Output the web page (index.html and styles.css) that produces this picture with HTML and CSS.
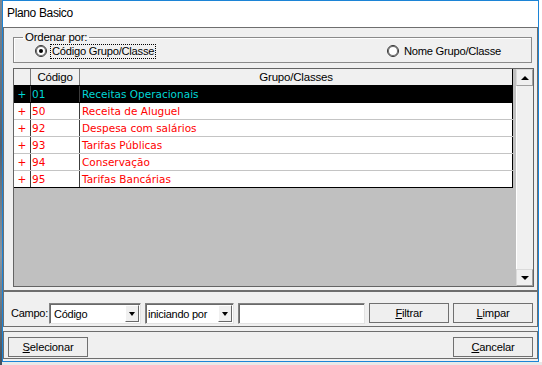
FILE: index.html
```html
<!DOCTYPE html>
<html lang="pt">
<head>
    <meta charset="utf-8">
    <title>Plano Basico</title>
    <link rel="stylesheet" href="styles.css">
</head>
<body>
<div class="screen">
    <div class="edge_left"></div>

    <div class="window">
        <div class="titlebar">Plano Basico</div>

        <div class="client">
            <!-- Ordering + grid -->
            <div class="panel panel_main">
                <fieldset class="group">
                    <legend>Ordenar por:</legend>
                    <div class="radios">
                        <label class="radio">
                            <span class="radio_dot checked"></span>
                            <span class="radio_text focus">Código Grupo/Classe</span>
                        </label>
                        <label class="radio radio_right">
                            <span class="radio_dot"></span>
                            <span class="radio_text">Nome Grupo/Classe</span>
                        </label>
                    </div>
                </fieldset>

                <div class="grid">
                    <div class="grid_area">
                        <div class="grid_row grid_head">
                            <div class="cell"></div>
                            <div class="cell">Código</div>
                            <div class="cell">Grupo/Classes</div>
                        </div>
                        <div class="grid_row selected">
                            <div class="cell">+</div>
                            <div class="cell">01</div>
                            <div class="cell">Receitas Operacionais</div>
                        </div>
                        <div class="grid_row">
                            <div class="cell">+</div>
                            <div class="cell">50</div>
                            <div class="cell">Receita de Aluguel</div>
                        </div>
                        <div class="grid_row">
                            <div class="cell">+</div>
                            <div class="cell">92</div>
                            <div class="cell">Despesa com salários</div>
                        </div>
                        <div class="grid_row">
                            <div class="cell">+</div>
                            <div class="cell">93</div>
                            <div class="cell">Tarifas Públicas</div>
                        </div>
                        <div class="grid_row">
                            <div class="cell">+</div>
                            <div class="cell">94</div>
                            <div class="cell">Conservação</div>
                        </div>
                        <div class="grid_row last">
                            <div class="cell">+</div>
                            <div class="cell">95</div>
                            <div class="cell">Tarifas Bancárias</div>
                        </div>
                    </div>

                    <div class="scrollbar">
                        <div class="scroll_btn"><span class="arrow_up"></span></div>
                        <div class="scroll_track"></div>
                        <div class="scroll_btn"><span class="arrow_down"></span></div>
                    </div>
                </div>
            </div>

            <!-- Filter -->
            <div class="panel panel_filter">
                <span class="field_label">Campo:</span>
                <div class="combo combo_field">
                    <span class="combo_text">Código</span>
                    <span class="combo_btn"><span class="arrow_down"></span></span>
                </div>
                <div class="combo combo_mode">
                    <span class="combo_text">iniciando por</span>
                    <span class="combo_btn"><span class="arrow_down"></span></span>
                </div>
                <div class="edit"></div>
                <button class="btn"><u>F</u>iltrar</button>
                <button class="btn"><u>L</u>impar</button>
            </div>

            <!-- Actions -->
            <div class="panel panel_buttons">
                <button class="btn"><u>S</u>elecionar</button>
                <button class="btn"><u>C</u>ancelar</button>
            </div>
        </div>
    </div>

    <div class="edge_right"></div>
</div>
</body>
</html>
```

FILE: styles.css
```css
/* Constants */
:root {
    --win-blue: #1c84d6;
    --face: #f0f0f0;
    --frame: #6e6e6e;
    --grid-bg: #c0c0c0;
    --row-line: #c4c4c4;
    --red: #ff0000;
    --cyan: #00d6d6;
}

/* Base */
html, body {
    margin: 0;
    padding: 0;
    background: #e8e8e8;
    font-family: "Liberation Sans", Arial, sans-serif;
    font-size: 11px;
    letter-spacing: -0.25px;
    color: #000;
}

.screen {
    display: flex;
    width: 542px;
    height: 365px;
    overflow: hidden;
}

.edge_left {
    width: 2px;
    height: 365px;
    background: linear-gradient(#7b8794, #55626f 40%, #8b96a1 70%, #44505c);
}

.edge_right {
    flex: 1;
    height: 362px;
    background: #fff;
}

/* Window frame */
.window {
    box-sizing: border-box;
    width: 537px;
    height: 362px;
    border: 1px solid var(--win-blue);
    background: var(--face);
    display: flex;
    flex-direction: column;
}

.titlebar {
    height: 26px;
    line-height: 24px;
    padding-left: 4px;
    background: #fff;
    font-size: 12px;
    letter-spacing: -0.35px;
}

.client {
    flex: 1;
    display: flex;
    flex-direction: column;
}

.panel {
    border: 1px solid var(--frame);
}

/* Top panel */
.panel_main {
    box-sizing: border-box;
    height: 264px;
    padding: 2px 3px 0 9px;
}

.group {
    margin: 0 2px 0 0;
    padding: 0 0 4px 0;
    border: 1px solid #8a8a8a;
    box-shadow: inset 1px 1px #fff;
    min-width: 0;
}

.group legend {
    margin-left: 9px;
    padding: 0 2px;
    line-height: 14px;
    font-size: 11.5px;
}

.radios {
    display: flex;
    align-items: center;
    height: 14px;
    padding: 0 29px 0 21px;
}

.radio {
    display: flex;
    align-items: center;
    gap: 4px;
}

.radio_right {
    margin-left: auto;
}

.radio_dot {
    box-sizing: border-box;
    width: 12px;
    height: 12px;
    border-radius: 50%;
    border: 1px solid #333;
    background: #fff;
    box-shadow: inset 0 0 0 1px #6a6a6a;
    display: flex;
    align-items: center;
    justify-content: center;
}

.radio_dot.checked::after {
    content: "";
    width: 4px;
    height: 4px;
    border-radius: 50%;
    background: #000;
}

.radio_text {
    font-size: 11.2px;
    line-height: 13px;
    padding: 0 1px;
}

.focus {
    outline: 1px dotted #000;
}

/* Data grid */
.grid {
    margin-top: 5px;
    height: 219px;
    box-sizing: border-box;
    border: 1px solid #646464;
    background: var(--grid-bg);
    display: flex;
    gap: 3px;
}

.grid_area {
    width: 499px;
    font-family: "DejaVu Sans", Verdana, sans-serif;
    font-size: 10.5px;
    letter-spacing: 0;
}

.grid_row {
    display: grid;
    grid-template-columns: 17px 49px 433px;
    height: 17px;
    box-sizing: border-box;
    border-bottom: 1px solid var(--row-line);
    background: #fff;
    color: var(--red);
}

.grid_row .cell {
    box-sizing: border-box;
    border-right: 1px solid #3c3c3c;
    line-height: 16px;
    white-space: nowrap;
    overflow: hidden;
}

.grid_row .cell:nth-child(1) {
    text-align: center;
}

.grid_row .cell:nth-child(2) {
    padding-left: 1px;
}

.grid_row .cell:nth-child(3) {
    padding-left: 2px;
    border-right-color: #000;
}

.grid_head {
    background: var(--face);
    color: #000;
    border-bottom-color: #000;
    font-family: "Liberation Sans", Arial, sans-serif;
    font-size: 11.5px;
    letter-spacing: -0.2px;
}

.grid_head .cell {
    border-right-color: #7a7a7a;
}

.grid_head .cell:nth-child(n) {
    padding-left: 0;
    text-align: center;
}

.grid_row.selected {
    background: #000;
    color: var(--cyan);
    border-bottom-color: #000;
}

.grid_row.last {
    border-bottom-color: #000;
}

/* Scrollbar */
.scrollbar {
    width: 17px;
    display: flex;
    flex-direction: column;
    background: var(--face);
    box-shadow: inset 1px 0 #fff;
}

.scroll_btn {
    box-sizing: border-box;
    height: 17px;
    border: 1px solid #dadada;
    border-right-color: #a0a0a0;
    border-bottom-color: #a0a0a0;
    display: flex;
    align-items: center;
    justify-content: center;
}

.scroll_track {
    flex: 1;
}

.arrow_up,
.arrow_down {
    width: 0;
    height: 0;
    border-left: 4px solid transparent;
    border-right: 4px solid transparent;
}

.arrow_up {
    border-bottom: 4px solid #000;
}

.arrow_down {
    border-top: 4px solid #000;
}

/* Filter panel */
.panel_filter {
    height: 36px;
    box-sizing: border-box;
    padding: 11px 4px 0 7px;
    display: flex;
    align-items: flex-start;
    gap: 4px;
}

.field_label {
    width: 38px;
    margin-right: -4px;
    line-height: 21px;
    white-space: nowrap;
}

.combo,
.edit {
    box-sizing: border-box;
    height: 21px;
    background: #fff;
    border: 1px solid;
    border-color: #828282 #e3e3e3 #e3e3e3 #828282;
    box-shadow: inset 1px 1px #696969;
}

.combo {
    display: flex;
    align-items: center;
    padding: 1px;
}

.combo_field {
    width: 92px;
}

.combo_mode {
    width: 89px;
}

.combo_text {
    flex: 1;
    padding-left: 3px;
    white-space: nowrap;
}

.combo_mode .combo_text {
    padding-left: 1px;
}

.combo_btn {
    box-sizing: border-box;
    width: 14px;
    height: 17px;
    background: var(--face);
    border: 1px solid;
    border-color: #fff #696969 #696969 #fff;
    display: flex;
    align-items: center;
    justify-content: center;
}

.combo_btn .arrow_down {
    border-left-width: 3.5px;
    border-right-width: 3.5px;
}

.edit {
    width: 127px;
}

.btn {
    box-sizing: border-box;
    width: 80px;
    height: 20px;
    margin: 0;
    padding: 0;
    border: 1px solid #707070;
    background: #efefef;
    font-family: "Liberation Sans", Arial, sans-serif;
    font-size: 11.2px;
    letter-spacing: -0.2px;
    color: #000;
}

/* Button panel */
.panel_buttons {
    margin-top: 4px;
    height: 28px;
    box-sizing: border-box;
    padding: 5px 4px 0 4px;
    display: flex;
    justify-content: space-between;
    align-items: flex-start;
}
```
